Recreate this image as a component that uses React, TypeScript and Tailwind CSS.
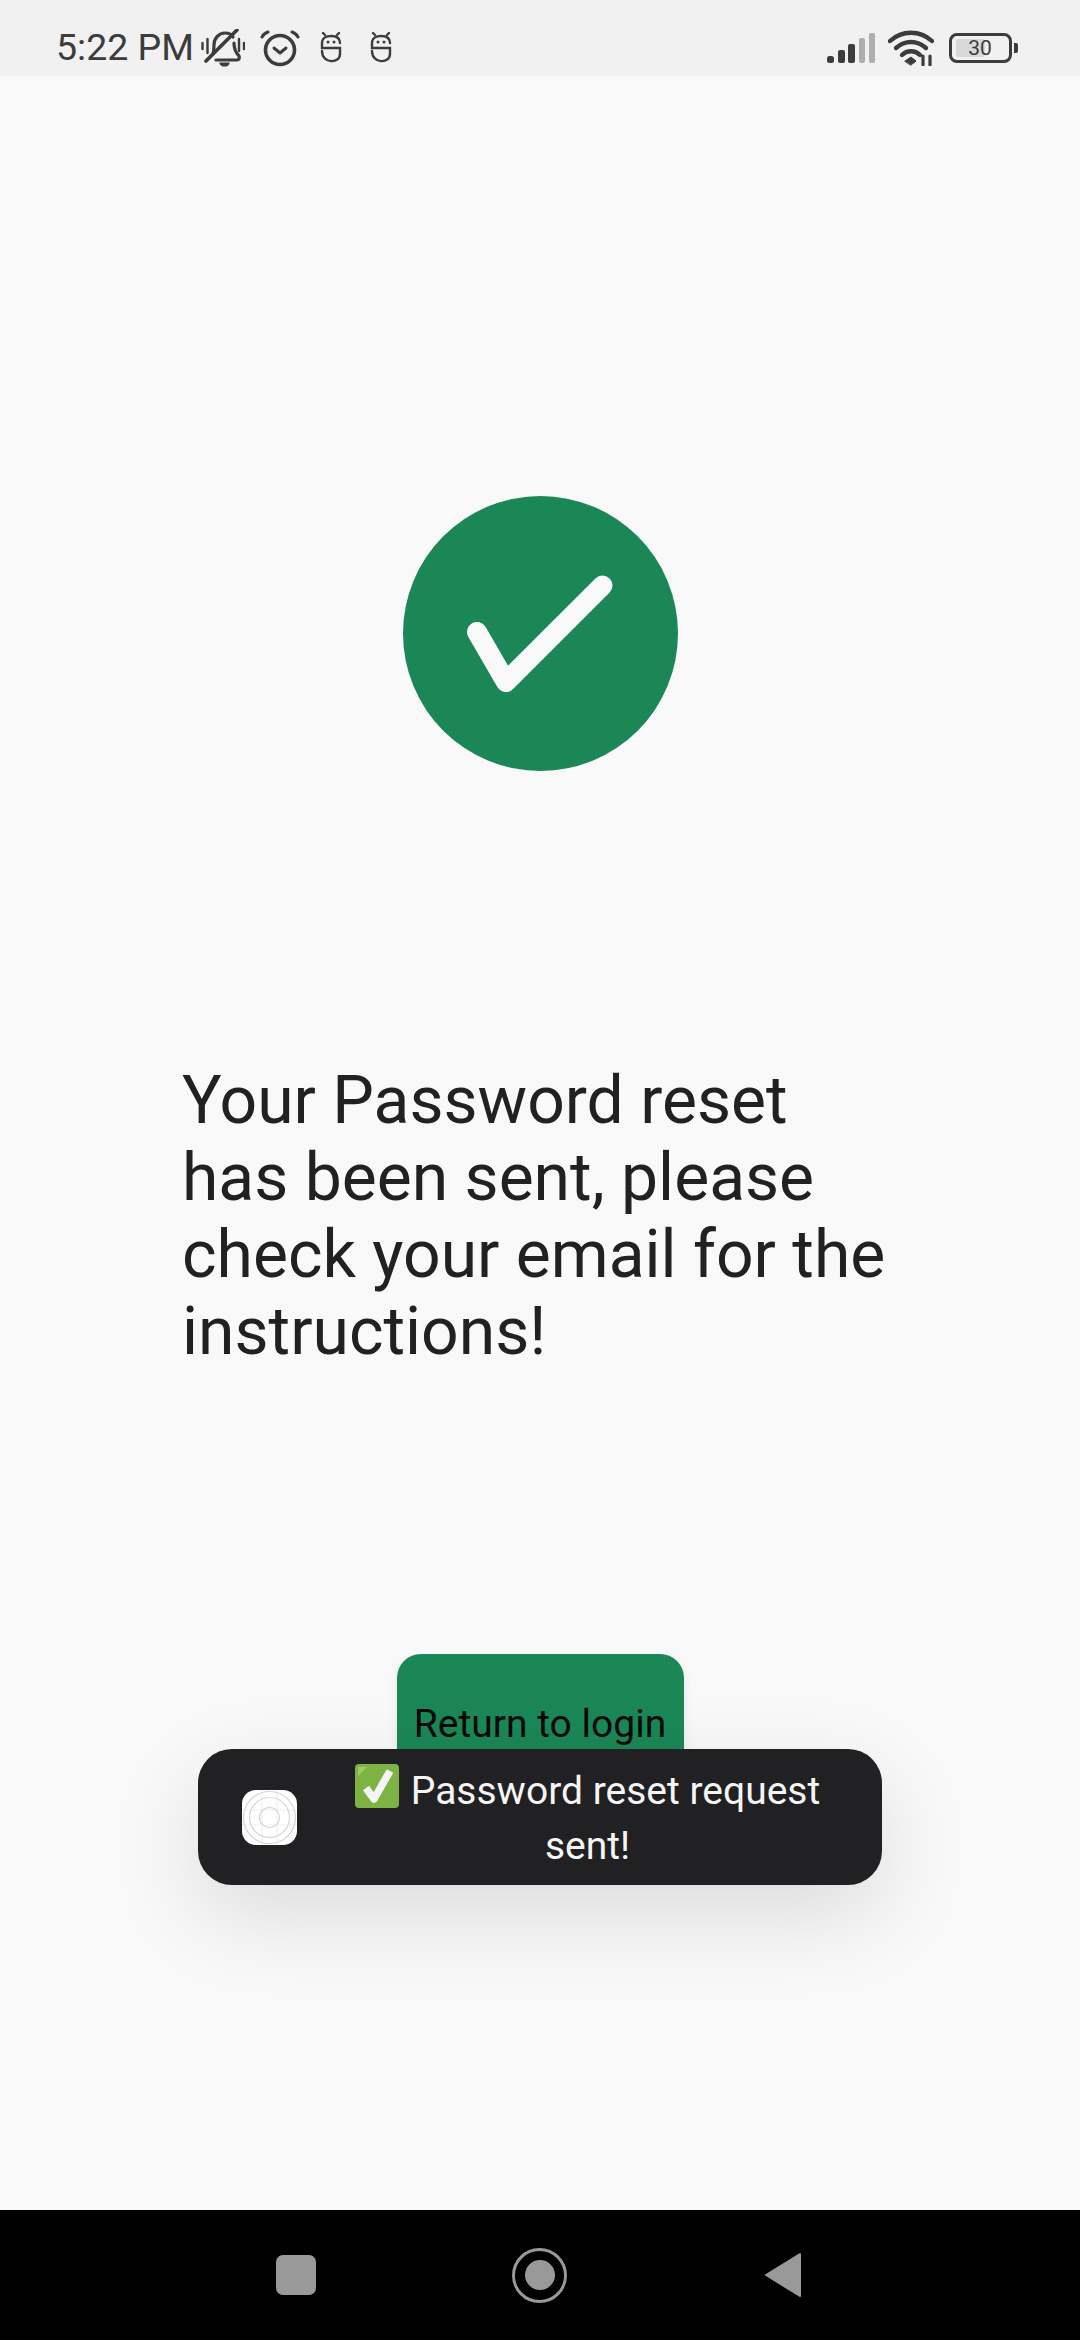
const StatusBar = () => {
  return (
    <div className="flex h-[76px] shrink-0 items-center bg-[#f1f1f1] pl-[56px] pt-[20px] text-[#3c3c3c]">
      <span className="w-[137px] whitespace-nowrap text-[37.5px] leading-none">5:22 PM</span>
      {/* muted bell */}
      <svg className="ml-[8px]" width="44" height="38" viewBox="0 0 44 38" fill="none" stroke="currentColor" strokeLinecap="round">
        <path d="M12 25c1-3 1-6 1-9 0-7 5-12 11-12 4 0 7 2 8 4M33 14c0 6 2 10 5 13 1 2 0 4-2 4H15" strokeWidth="3.2" />
        <path d="M19 34h9c-1 4-8 4-9 0z" fill="currentColor" strokeWidth="1.2" />
        <path d="M5 32 36 1" strokeWidth="3.6" />
        <path d="M1.500 14v6M6.500 10v14M38 10v12M43 14v6" strokeWidth="2.400" />
      </svg>
      {/* alarm */}
      <svg className="ml-[15px]" width="40" height="38" viewBox="0 0 40 38" fill="none" stroke="currentColor" strokeLinecap="round" strokeLinejoin="round">
        <circle cx="20" cy="21" r="14.5" strokeWidth="3.6" />
        <path d="m14 19 6 5 6-5" strokeWidth="3" />
        <path d="M2 8c1-2 3-4 6-5M38 8c-1-2-3-4-6-5" strokeWidth="3" />
      </svg>
      <RobotIcon className="ml-[20px]" />
      <RobotIcon className="ml-[28px]" />
      <svg className="ml-auto" width="49" height="32" viewBox="0 0 49 32" fill="#3c3c3c">
        <rect x="0" y="24" width="7" height="7" rx="2.5" />
        <rect x="11" y="18" width="7" height="13" rx="2" />
        <rect x="21" y="12" width="7" height="19" rx="2" />
        <rect x="32" y="6" width="6" height="25" rx="2" fill="#aeaeae" />
        <rect x="42" y="1" width="6" height="30" rx="2" fill="#aeaeae" />
      </svg>
      <svg className="ml-[12px]" width="46" height="36" viewBox="0 0 46 36" fill="none" stroke="#3c3c3c" strokeLinecap="round">
        <path d="M2 11c12-11 30-11 42 0" strokeWidth="4.4" />
        <path d="M8 18c9-8 21-8 30 0" strokeWidth="4.4" />
        <path d="M14 25c5-5 13-5 18 0" strokeWidth="4.4" />
        <path d="m17 31 6-4 5 4-5 4z" fill="#3c3c3c" strokeWidth="1" />
        <path d="M35 26v9M42 26v9" strokeWidth="3.2" />
      </svg>
      <div className="relative ml-[15px] flex h-[30px] w-[63px] items-center justify-center rounded-[8px] border-[3px] border-[#3c3c3c] text-[21px] leading-none">
        <div className="absolute left-[4px] top-[3px] h-[18px] w-[29px] rounded-[2px] bg-[#d8d8d8]" />
        <span className="relative pr-[1px]">30</span>
      </div>
      <div className="ml-[2px] mr-[62px] h-[10px] w-[4px] rounded-r-[2px] bg-[#3c3c3c]" />
    </div>
  );
};

const RobotIcon = ({ className }: { className: string }) => {
  return (
    <svg className={className} width="22" height="32" viewBox="0 0 22 32" fill="none" stroke="#3c3c3c" strokeLinecap="round">
      <path d="M20 11c0-5-4-7-9-7s-9 2-9 7v5h18v6c0 10-18 10-18-3" strokeWidth="2.4" />
      <path d="M3 1l2 2M19 1l-2 2" strokeWidth="2.4" />
      <circle cx="8" cy="10" r="1.5" fill="#3c3c3c" stroke="none" />
      <circle cx="14" cy="10" r="1.5" fill="#3c3c3c" stroke="none" />
    </svg>
  );
};

const Toast = () => {
  return (
    <div className="absolute left-[198px] top-[1749px] flex h-[136px] w-[684px] items-center rounded-[34px] bg-[#212123] pl-[44px] pr-[36px] shadow-[0_30px_90px_rgba(0,0,0,0.12)]">
      <svg className="shrink-0" width="55" height="55" viewBox="0 0 55 55" fill="none" stroke="#d4d4d4" strokeWidth="1.2">
        <rect width="55" height="55" rx="14" fill="#ffffff" stroke="none" />
        <path d="M0 20h55M0 35h55M20 0v55M35 0v55" stroke="#f0f0f0" />
        <circle cx="27.5" cy="27.5" r="26" />
        <circle cx="27.5" cy="27.5" r="20" />
        <circle cx="27.5" cy="27.5" r="10" />
      </svg>
      <p className="ml-[32px] flex-1 pt-[3px] text-center text-[39px] leading-[55px] text-[#f5f5f5]">
        <svg className="mr-[12px] inline-block align-[-4px]" width="44" height="44" viewBox="0 0 44 44">
          <rect width="44" height="44" rx="4" fill="#7cb342" />
          <path d="M3 3h9L3 12z" fill="#9ccc65" />
          <path d="m11 24 8 11L35 7" fill="none" stroke="#f5f5f5" strokeWidth="7.5" strokeLinejoin="round" />
        </svg>
        Password reset request sent!
      </p>
    </div>
  );
};

export default function App() {
  return (
    <div className="relative flex h-[2340px] w-[1080px] flex-col overflow-hidden bg-[#f9f9f9] font-['Roboto',sans-serif]">
      <StatusBar />

      <main className="flex flex-1 flex-col items-center">
        <div className="mt-[420px] flex h-[275px] w-[275px] items-center justify-center rounded-full bg-[#1b8757]">
          <svg width="146" height="118" viewBox="0 0 146 118" fill="none" stroke="#f9f9f9" strokeWidth="20" strokeLinecap="round" strokeLinejoin="round">
            <path d="M10 57 39 107 135.500 10.500" />
          </svg>
        </div>

        <p className="mt-[291px] w-[716px] text-[66px] leading-[77px] text-[#212121]">
          Your Password reset has been sent, please check your email for the instructions!
        </p>

        <button className="mt-[284px] h-[138px] w-[287px] rounded-[24px] bg-[#1b8757] pt-[3px] text-[39px] text-[#0a0a0a] shadow-[0_4px_10px_rgba(0,0,0,0.08)]">
          Return to login
        </button>
      </main>

      <Toast />

      <nav className="flex h-[130px] shrink-0 items-center bg-black pl-[276px]">
        <div className="h-[40px] w-[40px] rounded-[7px] bg-[#999999]" />
        <div className="ml-[196px] flex h-[55px] w-[55px] items-center justify-center rounded-full border-[3px] border-[#999999]">
          <div className="h-[30px] w-[30px] rounded-full bg-[#999999]" />
        </div>
        <svg className="ml-[197px]" width="38" height="46" viewBox="0 0 38 46" fill="#999999" stroke="#999999" strokeWidth="2" strokeLinejoin="round">
          <path d="M36 2 2 23l34 21z" />
        </svg>
      </nav>
    </div>
  );
}
